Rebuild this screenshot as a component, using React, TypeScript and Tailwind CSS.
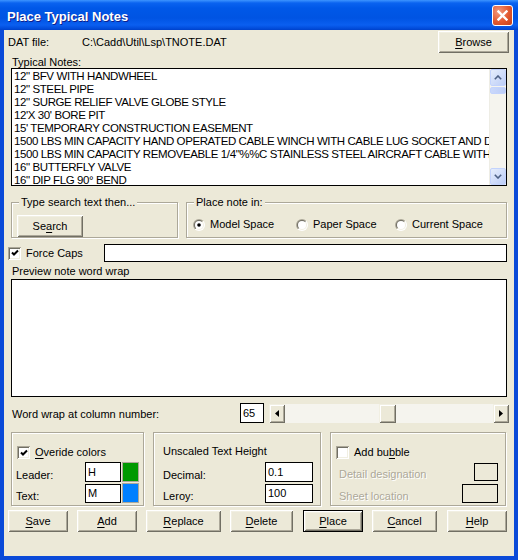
import React from 'react';

const notes = [
  '12" BFV WITH HANDWHEEL',
  '12" STEEL PIPE',
  '12" SURGE RELIEF VALVE GLOBE STYLE',
  "12'X 30' BORE PIT",
  "15' TEMPORARY CONSTRUCTION EASEMENT",
  '1500 LBS MIN CAPACITY HAND OPERATED CABLE WINCH WITH CABLE LUG SOCKET AND DRUM',
  '1500 LBS MIN CAPACITY REMOVEABLE 1/4"%%C STAINLESS STEEL AIRCRAFT CABLE WITH THIMBLE',
  '16" BUTTERFLY VALVE',
  '16" DIP FLG 90° BEND',
];

function Accel({ text, at }: { text: string; at: number }) {
  return (
    <>
      {text.slice(0, at)}
      <span className="underline decoration-1 underline-offset-[2px]">{text[at]}</span>
      {text.slice(at + 1)}
    </>
  );
}

function Btn({ text, at, w, def = false }: { text: string; at: number; w: string; def?: boolean }) {
  return (
    <div
      className={`${w} h-[22px] flex items-center justify-center bg-[#ece9d8] shadow-[inset_1px_1px_0_#fff,inset_-1px_-1px_0_#716f64,inset_2px_2px_0_#f1efe2,inset_-2px_-2px_0_#aca899] ${
        def ? 'border border-black' : ''
      }`}
    >
      <span className="pt-[1px]">
        <Accel text={text} at={at} />
      </span>
    </div>
  );
}

function Check({ checked = false }: { checked?: boolean }) {
  return (
    <span className="w-[13px] h-[13px] shrink-0 flex items-center justify-center bg-white shadow-[inset_1px_1px_0_#aca899,inset_-1px_-1px_0_#fff,inset_2px_2px_0_#716f64,inset_-2px_-2px_0_#f1efe2]">
      {checked && (
        <svg width="8" height="8" viewBox="0 0 8 8">
          <path d="M1 3.5l2 2 4-4" fill="none" stroke="#000" strokeWidth="2" />
        </svg>
      )}
    </span>
  );
}

function Radio({ id, checked = false }: { id: string; checked?: boolean }) {
  return (
    <svg width="12" height="12" viewBox="0 0 12 12" className="shrink-0">
      <defs>
        <linearGradient id={`${id}a`} x1="0" y1="0" x2="1" y2="1">
          <stop offset="0.5" stopColor="#aca899" />
          <stop offset="0.5" stopColor="#ffffff" />
        </linearGradient>
        <linearGradient id={`${id}b`} x1="0" y1="0" x2="1" y2="1">
          <stop offset="0.5" stopColor="#716f64" />
          <stop offset="0.5" stopColor="#f1efe2" />
        </linearGradient>
      </defs>
      <circle cx="6" cy="6" r="6" fill={`url(#${id}a)`} />
      <circle cx="6" cy="6" r="5" fill={`url(#${id}b)`} />
      <circle cx="6" cy="6" r="4" fill="#fff" />
      {checked && <circle cx="6" cy="6" r="1.8" fill="#000" />}
    </svg>
  );
}

function LunaArrow({ up }: { up?: boolean }) {
  return (
    <div className="h-[17px] flex items-center justify-center rounded-[2px] border border-[#c3d3fd] bg-[linear-gradient(135deg,#e6eefc,#bccdf7)]">
      <svg width="8" height="5" viewBox="0 0 8 5">
        <polyline
          points={up ? '0.8,4.2 4,1 7.2,4.2' : '0.8,0.8 4,4 7.2,0.8'}
          fill="none"
          stroke="#4d6185"
          strokeWidth="1.6"
        />
      </svg>
    </div>
  );
}

const raised =
  'bg-[#ece9d8] shadow-[inset_1px_1px_0_#f1efe2,inset_-1px_-1px_0_#716f64,inset_2px_2px_0_#fff,inset_-2px_-2px_0_#aca899]';

const group = 'border border-[#aca899] shadow-[1px_1px_0_#fff,inset_1px_1px_0_#fff]';

export default function App() {
  return (
    <div className="w-[518px] h-[560px] flex flex-col bg-[#0a4ad8] font-['Liberation_Sans',Arial,sans-serif] text-[11px] leading-[13px] text-black">
      {/* title bar */}
      <div className="h-[30px] shrink-0 flex items-start bg-[linear-gradient(180deg,#3d95ff_0px,#0a63f0_3px,#0058e8_8px,#0054e3_18px,#0a5ff0_25px,#0049d6_29px,#0040c8_30px)]">
        <span className="ml-[7px] mt-[9px] text-[13px] leading-[16px] font-bold text-white [text-shadow:1px_1px_0_#0f1f8c]">
          Place Typical Notes
        </span>
        <div className="ml-auto mr-[5px] mt-[5px] w-[21px] h-[21px] rounded-[3px] border border-white flex items-center justify-center bg-[radial-gradient(circle_at_30%_30%,#f29a7f,#e2582f_55%,#c2401b)]">
          <svg width="11" height="11" viewBox="0 0 11 11">
            <path d="M1.5 1.5l8 8M9.5 1.5l-8 8" stroke="#fff" strokeWidth="2.4" strokeLinecap="square" />
          </svg>
        </div>
      </div>

      {/* client area */}
      <div className="flex-1 mx-[4px] mb-[4px] bg-[#ece9d8] flex flex-col">
        <div className="mt-[1px] h-[22px] flex items-center">
          <span className="ml-[4px] w-[74px]">DAT file:</span>
          <span>C:\Cadd\Util\Lsp\TNOTE.DAT</span>
          <div className="ml-auto mr-[5px]">
            <Btn text="Browse" at={0} w="w-[71px]" />
          </div>
        </div>

        <div className="mt-[3px] ml-[8px] h-[12px]">Typical Notes:</div>

        <div className="ml-[7px] mr-[7px] h-[118px] border border-black bg-white flex">
          <div className="flex-1 overflow-hidden pl-[2px] pt-[1px] text-[11.5px] tracking-[-0.4px]">
            {notes.map((n) => (
              <div key={n} className="h-[13px] leading-[13px] whitespace-nowrap">
                {n}
              </div>
            ))}
          </div>
          <div className="w-[17px] flex flex-col bg-[#f5f4ee] border-l border-[#eeede5]">
            <LunaArrow up />
            <div className="mt-[1px] h-[7px] rounded-[2px] border border-[#c3d3fd] bg-[linear-gradient(90deg,#cad8fb,#bccdf7)]" />
            <div className="flex-1" />
            <LunaArrow />
          </div>
        </div>

        {/* search + place note in */}
        <div className="mt-[16px] h-[36px] flex">
          <div className={`ml-[7px] w-[167px] relative ${group}`}>
            <span className="absolute -top-[7px] left-[7px] px-[2px] bg-[#ece9d8]">Type search text then...</span>
            <div className="pt-[12px] pl-[5px]">
              <Btn text="Search" at={2} w="w-[66px]" />
            </div>
          </div>
          <div className={`ml-[8px] w-[321px] relative ${group}`}>
            <span className="absolute -top-[7px] left-[7px] px-[2px] bg-[#ece9d8]">Place note in:</span>
            <div className="mt-[15px] h-[13px] pl-[6px] flex items-center">
              <div className="w-[103px] flex items-center gap-[5px]">
                <Radio id="r1" checked />
                <span>Model Space</span>
              </div>
              <div className="w-[99px] flex items-center gap-[5px]">
                <Radio id="r2" />
                <span>Paper Space</span>
              </div>
              <div className="flex items-center gap-[5px]">
                <Radio id="r3" />
                <span>Current Space</span>
              </div>
            </div>
          </div>
        </div>

        {/* force caps */}
        <div className="mt-[6px] h-[18px] flex items-center">
          <div className="ml-[4px]">
            <Check checked />
          </div>
          <span className="ml-[5px]">Force Caps</span>
          <div className="ml-auto mr-[7px] w-[403px] h-[18px] border border-black bg-white" />
        </div>

        <div className="mt-[3px] ml-[8px] h-[14px] leading-[13px]">Preview note word wrap</div>
        <div className="ml-[7px] mr-[7px] h-[118px] border border-black bg-white" />

        {/* word wrap */}
        <div className="mt-[6px] h-[20px] flex items-center">
          <span className="ml-[8px] w-[228px] pt-[3px]">Word wrap at column number:</span>
          <div className="w-[24px] h-[20px] border border-black bg-white pl-[2px] flex items-center">65</div>
          <div className="ml-[5px] w-[240px] h-[19px] flex bg-[#f5f4ee]">
            <div className={`w-[16px] h-[19px] flex items-center justify-center ${raised}`}>
              <svg width="4" height="7" viewBox="0 0 4 7">
                <polygon points="4,0 0,3.5 4,7" fill="#000" />
              </svg>
            </div>
            <div className="w-[94px]" />
            <div className={`w-[17px] h-[19px] ${raised}`} />
            <div className="flex-1" />
            <div className={`w-[16px] h-[19px] flex items-center justify-center ${raised}`}>
              <svg width="4" height="7" viewBox="0 0 4 7">
                <polygon points="0,0 4,3.5 0,7" fill="#000" />
              </svg>
            </div>
          </div>
        </div>

        {/* bottom groups */}
        <div className="mt-[9px] h-[74px] flex">
          <div className={`ml-[7px] w-[133px] ${group} flex flex-col`}>
            <div className="mt-[13px] pl-[5px] h-[13px] flex items-center gap-[5px]">
              <Check checked />
              <span>
                <Accel text="Overide colors" at={0} />
              </span>
            </div>
            <div className="mt-[3px] h-[20px] flex items-end">
              <span className="pl-[4px] w-[73px]">Leader:</span>
              <div className="w-[36px] h-[20px] border border-black bg-white pl-[2px] flex items-center">H</div>
              <div className="ml-[1px] w-[17px] h-[20px] border border-[#aca899] bg-[#009900]" />
            </div>
            <div className="mt-[2px] h-[19px] flex items-end">
              <span className="pl-[4px] w-[73px]">Text:</span>
              <div className="w-[36px] h-[19px] border border-black bg-white pl-[2px] flex items-center">M</div>
              <div className="ml-[1px] w-[17px] h-[20px] border border-[#aca899] bg-[#0080ff]" />
            </div>
          </div>

          <div className={`ml-[9px] w-[168px] ${group} flex flex-col`}>
            <div className="mt-[12px] pl-[9px] h-[13px]">Unscaled Text Height</div>
            <div className="mt-[4px] h-[20px] flex items-end">
              <span className="pl-[9px] w-[111px]">Decimal:</span>
              <div className="w-[48px] h-[20px] border border-black bg-white pl-[2px] flex items-center">0.1</div>
            </div>
            <div className="mt-[2px] h-[19px] flex items-end">
              <span className="pl-[9px] w-[111px]">Leroy:</span>
              <div className="w-[48px] h-[19px] border border-black bg-white pl-[2px] flex items-center">100</div>
            </div>
          </div>

          <div className={`ml-[9px] w-[176px] ${group} flex flex-col`}>
            <div className="mt-[13px] pl-[5px] h-[13px] flex items-center gap-[5px]">
              <Check />
              <span>
                <Accel text="Add bubble" at={6} />
              </span>
            </div>
            <div className="mt-[4px] h-[18px] flex items-end justify-between pr-[7px]">
              <span className="pl-[8px] text-[#aca899] [text-shadow:1px_1px_0_#fff]">Detail designation</span>
              <div className="w-[24px] h-[18px] border border-black" />
            </div>
            <div className="mt-[3px] h-[19px] flex items-end justify-between pr-[7px]">
              <span className="pl-[8px] text-[#aca899] [text-shadow:1px_1px_0_#fff]">Sheet location</span>
              <div className="w-[36px] h-[19px] border border-black" />
            </div>
          </div>
        </div>

        {/* buttons */}
        <div className="mt-[4px] h-[22px] flex">
          <div className="ml-[4px]">
            <Btn text="Save" at={0} w="w-[60px]" />
          </div>
          <div className="ml-[9px]">
            <Btn text="Add" at={0} w="w-[60px]" />
          </div>
          <div className="ml-[9px]">
            <Btn text="Replace" at={0} w="w-[75px]" />
          </div>
          <div className="ml-[9px]">
            <Btn text="Delete" at={0} w="w-[63px]" />
          </div>
          <div className="ml-[10px]">
            <Btn text="Place" at={0} w="w-[60px]" def />
          </div>
          <div className="ml-[9px]">
            <Btn text="Cancel" at={0} w="w-[65px]" />
          </div>
          <div className="ml-[10px]">
            <Btn text="Help" at={0} w="w-[60px]" />
          </div>
        </div>
      </div>
    </div>
  );
}
